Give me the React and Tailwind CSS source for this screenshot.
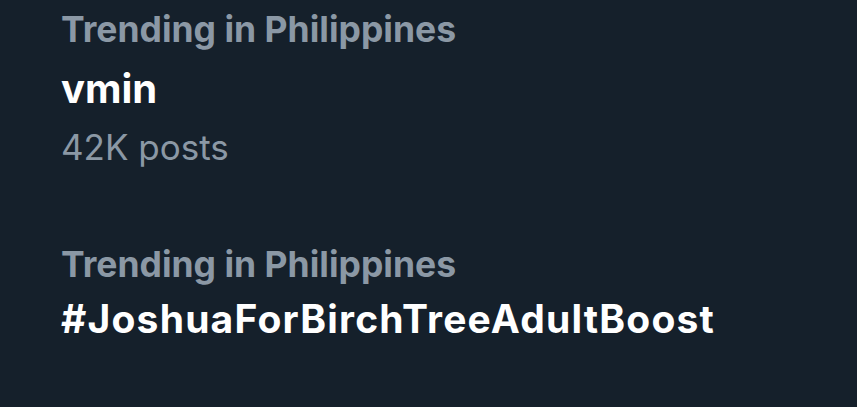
const trends = [
  { place: 'Trending in Philippines', topic: 'vmin', posts: '42K posts' },
  { place: 'Trending in Philippines', topic: '#JoshuaForBirchTreeAdultBoost', long: true },
];

export default function App() {
  return (
    <div className="flex h-[407px] w-[857px] flex-col gap-[74px] overflow-hidden bg-[#15202b] px-[61px] pt-[8px] font-['Inter',sans-serif]">
      {trends.map((t, i) => (
        <div key={i}>
          <div className="text-[35.5px] font-bold leading-[44px] text-[#8b98a5]">{t.place}</div>
          <div
            className={
              t.long
                ? 'mt-[8px] text-[39px] font-bold leading-[48px] tracking-[1.2px] text-white'
                : 'mt-[13px] text-[40px] font-bold leading-[48px] text-white'
            }
          >
            {t.topic}
          </div>
          {t.posts && (
            <div className="mt-[12px] text-[35px] leading-[44px] text-[#8b98a5]">{t.posts}</div>
          )}
        </div>
      ))}
    </div>
  );
}
